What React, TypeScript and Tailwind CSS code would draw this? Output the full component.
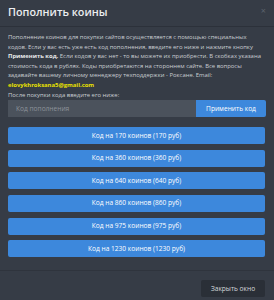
const codes = [170, 360, 640, 860, 975, 1230];

export default function App() {
  return (
    <div
      className="w-[274px] h-[300px] bg-[#363c46] text-[#c9cdd2] overflow-hidden"
      style={{ fontFamily: '"Open Sans", sans-serif' }}
    >
      <div className="flex items-start justify-between h-[27px] px-[8px] pt-[5px] border-b border-[#2c313a]">
        <h2 className="text-[10.8px] leading-[14px] font-semibold text-[#eceef0]">Пополнить коины</h2>
        <button className="text-[9px] leading-[10px] text-[#5b626c] mt-[1px]">×</button>
      </div>

      <div className="px-[8px] pt-[6px]">
        <p className="text-[5.9px] leading-[9.6px] whitespace-nowrap">
          Пополнение коинов для покупки сайтов осуществляется с помощью специальных
          <br />
          кодов. Если у вас есть уже есть код пополнения, введите его ниже и нажмите кнопку
          <br />
          <b className="font-bold text-[#e6e8ea]">Применить код.</b> Если кодов у вас нет - то вы
          можете их приобрести. В скобках указана
          <br />
          стоимость кода в рублях. Коды приобретаются на стороннем сайте. Все вопросы
          <br />
          задавайте вашему личному менеджеру техподдержки - Роксане. Email:
          <br />
          <span className="font-bold text-[#e8e000]">elovykhroksana5@gmail.com</span>
          <br />
          После покупки кода введите его ниже:
        </p>

        <div className="flex h-[17px]">
          <input
            placeholder="Код пополнения"
            className="flex-1 min-w-0 bg-[#4b525c] px-[8px] text-[6.6px] text-[#c9cdd2] placeholder:text-[#8d939b] outline-none"
          />
          <button className="w-[70px] bg-[#3d88dc] text-white text-[6.6px] rounded-r-[2px]">
            Применить код
          </button>
        </div>

        <div className="flex flex-col gap-[5.6px] mt-[10px] mr-[1px]">
          {codes.map((c) => (
            <button
              key={c}
              className="h-[17px] w-full bg-[#3d88dc] text-white text-[6.6px] rounded-[2px]"
            >
              Код на {c} коинов ({c} руб)
            </button>
          ))}
        </div>
      </div>

      <div className="mt-[13px] border-t border-[#2f343d] flex justify-end px-[9px] pt-[9px]">
        <button className="h-[17px] w-[64px] bg-[#2a2f37] text-[#d5d8dc] text-[6.6px] rounded-[2px]">
          Закрыть окно
        </button>
      </div>
    </div>
  );
}
